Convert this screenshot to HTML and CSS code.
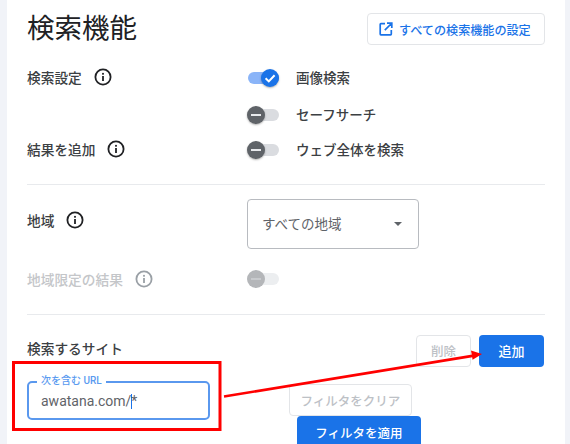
FILE: index.html
```html
<!DOCTYPE html>
<html lang="ja">
<head>
<meta charset="utf-8">
<title>検索機能</title>
<link rel="stylesheet" href="styles.css">
</head>
<body>
<main class="card">
  <header class="head">
    <h1 class="title">検索機能</h1>
    <a class="btn-outline link-btn">
      <svg class="ext" viewBox="0 0 14 14"><path d="M6 1.7H1.9a.7.7 0 0 0-.7.7v9.7c0 .4.3.7.7.7h9.7c.4 0 .7-.3.7-.7V8M8 1.2h4.8V6M12.5 1.5 5.8 8.2" fill="none" stroke="#1a73e8" stroke-width="1.7"/></svg>
      すべての検索機能の設定
    </a>
  </header>

  <section class="group group-a">
    <div class="row r1">
      <div class="label">検索設定<svg class="info"><use href="#i"/></svg></div>
      <div class="toggle-wrap">
        <span class="toggle on"><span class="track"></span><span class="thumb"><svg viewBox="0 0 18 18"><path d="M4.6 9.2 7.8 12.4 13.6 6.2" fill="none" stroke="#fff" stroke-width="2"/></svg></span></span>
        <span class="tlabel">画像検索</span>
      </div>
    </div>
    <div class="row r2">
      <div class="label"></div>
      <div class="toggle-wrap">
        <span class="toggle"><span class="track"></span><span class="thumb"><i class="dash"></i></span></span>
        <span class="tlabel">セーフサーチ</span>
      </div>
    </div>
    <div class="row r3">
      <div class="label">結果を追加<svg class="info"><use href="#i"/></svg></div>
      <div class="toggle-wrap">
        <span class="toggle"><span class="track"></span><span class="thumb"><i class="dash"></i></span></span>
        <span class="tlabel">ウェブ全体を検索</span>
      </div>
    </div>
  </section>

  <section class="group group-b">
    <div class="row r4">
      <div class="label">地域<svg class="info"><use href="#i"/></svg></div>
      <div class="select"><span class="select-text">すべての地域</span><i class="caret"></i></div>
    </div>
    <div class="row r5 disabled">
      <div class="label">地域限定の結果<svg class="info"><use href="#i"/></svg></div>
      <span class="toggle"><span class="track"></span><span class="thumb"><i class="dash"></i></span></span>
    </div>
  </section>

  <section class="sites">
    <div class="sites-head">
      <h2 class="sites-title">検索するサイト</h2>
      <div class="sites-actions">
        <button class="btn-outline del">削除</button>
        <button class="btn-primary add">追加</button>
      </div>
    </div>
    <div class="sites-body">
      <div class="field">
        <span class="field-label">次を含む URL</span>
        <span class="field-value">awatana.com/<span class="cursor"></span>*</span>
      </div>
      <div class="filters">
        <button class="btn-outline clear">フィルタをクリア</button>
        <button class="btn-primary apply">フィルタを適用</button>
      </div>
    </div>
  </section>
</main>

<svg class="annotation" viewBox="0 0 570 444">
  <rect x="13.5" y="362.5" width="206.5" height="67" fill="none" stroke="#f00" stroke-width="3"/>
  <path d="M224 396.5 474 355.6" stroke="#f00" stroke-width="2.6" fill="none"/>
  <path d="M482 354 471 350.5 472.6 359.8Z" fill="#f00"/>
</svg>

<svg class="defs" width="0" height="0">
  <symbol id="i" viewBox="0 0 18 18">
    <circle cx="9" cy="9" r="7.6" fill="none" stroke="currentColor" stroke-width="1.8"/>
    <rect x="8.1" y="8" width="1.8" height="5" fill="currentColor"/>
    <rect x="8.1" y="4.9" width="1.8" height="1.8" fill="currentColor"/>
  </symbol>
</svg>
</body>
</html>
```
FILE: styles.css
```css
* { box-sizing: border-box; }
html, body { margin: 0; height: 444px; overflow: hidden; }
body {
  position: relative;
  width: 570px;
  background: #f1f3f8;
  padding: 0 5px 0 7px;
  font-family: Roboto, "Noto Sans CJK JP", sans-serif;
  color: #3c4043;
}
.card { background: #fff; height: 444px; padding: 0 20px; overflow: hidden; }
.head { display: flex; justify-content: space-between; align-items: center; height: 58px; }
.title { margin: 0; font-size: 27.5px; font-weight: 400; color: #202124; line-height: 58px; }
.btn-outline {
  border: 1px solid #e3e5e8;
  border-radius: 4px;
  background: #fff;
  font-family: inherit;
}
.btn-primary {
  border: 0;
  border-radius: 4px;
  background: #1a73e8;
  color: #fff;
  font-family: inherit;
  font-weight: 500;
  font-size: 12.5px;
  padding: 0;
}
.link-btn {
  display: flex;
  align-items: center;
  gap: 6px;
  width: 178px;
  height: 32px;
  padding-left: 11px;
  color: #1a73e8;
  font-size: 12.1px;
  font-weight: 500;
}
.ext { width: 14px; height: 14px; flex: none; }
.group-a { height: 127px; padding-top: 8px; border-bottom: 1px solid #e8eaed; }
.group-b { height: 130px; border-bottom: 1px solid #e8eaed; padding-top: 14px; }
.row { display: flex; align-items: center; }
.label {
  width: 220px;
  flex: none;
  display: flex;
  align-items: center;
  gap: 12px;
  padding-bottom: 2px;
  font-size: 13.7px;
  font-weight: 500;
}
.info { width: 18px; height: 18px; color: #202124; }
.r1 { height: 24px; }
.r2 { height: 24px; margin-top: 13px; }
.r3 { height: 24px; margin-top: 11px; }
.toggle-wrap { display: flex; align-items: center; gap: 17px; }
.tlabel { font-size: 13.5px; font-weight: 500; color: #3c4043; padding-bottom: 2px; }
.toggle { position: relative; display: block; width: 32px; height: 18px; flex: none; }
.track { position: absolute; left: 1px; right: 0; top: 3px; height: 12px; border-radius: 6px; background: #dadce0; }
.thumb {
  position: absolute;
  left: 0;
  top: 0;
  width: 18px;
  height: 18px;
  border-radius: 50%;
  background: #5f6368;
  box-shadow: 0 1px 2px rgba(0,0,0,.3);
  display: flex;
  align-items: center;
  justify-content: center;
}
.thumb svg { width: 18px; height: 18px; display: block; }
.dash { display: block; width: 10px; height: 2px; background: #e8eaed; }
.on .track { background: #8ab4f8; }
.on .thumb { left: 14px; background: #1a73e8; }
.r4 { height: 50px; }
.r4 .label { padding-bottom: 8px; }
.select {
  width: 172px;
  height: 50px;
  border: 1px solid #b8bbc0;
  border-radius: 4px;
  display: flex;
  align-items: center;
  justify-content: space-between;
  padding: 0 16px 0 14px;
  font-size: 13.5px;
  color: #5f6368;
}
.select-text { padding-bottom: 3px; }
.caret { width: 0; height: 0; border: 4px solid transparent; border-top: 4.5px solid #5f6368; border-bottom: 0; }
.r5 { height: 24px; margin-top: 18px; }
.r5 .label { padding-bottom: 1px; }
.disabled .label { color: #c4c6c9; }
.disabled .info { color: #9aa0a6; }
.disabled .track { background: #eceef0; }
.disabled .thumb { background: #b4b6b9; box-shadow: none; }
.disabled .dash { background: #c8cacd; }
.sites { padding-top: 19px; }
.sites-head { display: flex; justify-content: space-between; align-items: center; height: 33px; }
.sites-title { margin: 0; font-size: 13.7px; font-weight: 500; color: #3c4043; position: relative; top: -3px; }
.sites-actions { display: flex; gap: 8px; margin-right: 1px; }
.del { width: 55px; height: 32px; color: #bdc1c6; font-size: 12.5px; font-weight: 500; padding: 0; }
.add { width: 65px; height: 32px; font-size: 13px; }
.sites-body { display: flex; }
.field {
  position: relative;
  width: 183px;
  height: 39px;
  margin-top: 14px;
  border: 2px solid #5a98ee;
  border-radius: 5px;
  display: flex;
  align-items: center;
  padding: 0 12px;
  font-size: 14px;
  color: #5f6368;
}
.field-label {
  position: absolute;
  left: 8px;
  top: -8px;
  padding: 0 4px;
  background: #fff;
  color: #5b9bf0;
  font-size: 10px;
  font-weight: 500;
  line-height: 12px;
  white-space: nowrap;
}
.field-value { white-space: nowrap; }
.cursor { display: inline-block; width: 1px; height: 15px; margin-right: -1px; background: #1a73e8; vertical-align: -3px; }
.filters { display: flex; flex-direction: column; align-items: flex-start; margin-left: 79px; margin-top: 17px; }
.clear { width: 123px; height: 32px; color: #bdc1c6; font-size: 12.5px; font-weight: 500; padding: 0; }
.apply { width: 124px; height: 32px; margin-left: 8px; }
.annotation { position: absolute; left: 0; top: 0; width: 570px; height: 444px; pointer-events: none; }
.defs { position: absolute; }
```
